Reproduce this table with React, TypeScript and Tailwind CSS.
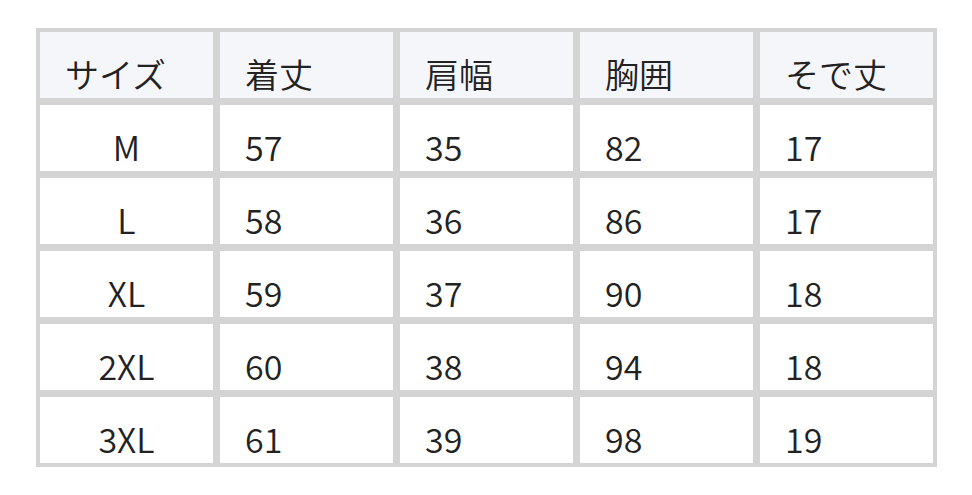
const headers = ['サイズ', '着丈', '肩幅', '胸囲', 'そで丈']

const rows = [
  ['M', '57', '35', '82', '17'],
  ['L', '58', '36', '86', '17'],
  ['XL', '59', '37', '90', '18'],
  ['2XL', '60', '38', '94', '18'],
  ['3XL', '61', '39', '98', '19'],
]

export default function App() {
  return (
    <div
      className="w-[972px] h-[495px] bg-white pt-[28px] pl-[36px]"
      style={{ fontFamily: '"Noto Sans CJK JP", "Noto Sans", sans-serif' }}
    >
      <div className="w-[901px] bg-[#d4d4d4] p-[4px] grid grid-cols-5 gap-x-[7px] gap-y-[7px] text-[34px] leading-[50px] font-[350] text-[#222222]">
        {headers.map(h => (
          <div key={h} className="h-[66px] bg-[#f5f6fa] pt-[17px] pl-[25px]">
            {h}
          </div>
        ))}
        {rows.map(row =>
          row.map((cell, i) => (
            <div
              key={row[0] + i}
              className={`h-[66px] bg-white pt-[17px] ${i === 0 ? 'text-center' : 'pl-[25px]'}`}
            >
              {cell}
            </div>
          ))
        )}
      </div>
    </div>
  )
}
